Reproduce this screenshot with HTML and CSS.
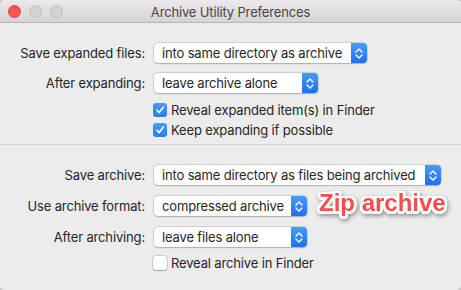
FILE: index.html
```html
<!DOCTYPE html>
<html>
<head>
<meta charset="utf-8">
<link rel="stylesheet" href="styles.css">
</head>
<body>
<div class="window">
  <div class="titlebar">
    <div class="lights">
      <span class="light red"></span>
      <span class="light"></span>
      <span class="light"></span>
    </div>
    <div class="title">Archive Utility Preferences</div>
  </div>
  <div class="section first">
    <div class="row">
      <div class="label">Save expanded files:</div>
      <div class="select w1"><span class="val">into same directory as archive</span><span class="stepper"><svg width="8" height="13" viewBox="0 0 8 13"><path d="M1 5 L4 2 L7 5 M1 8 L4 11 L7 8" fill="none" stroke="#fff" stroke-width="1.4" stroke-linecap="round" stroke-linejoin="round"/></svg></span></div>
    </div>
    <div class="row">
      <div class="label">After expanding:</div>
      <div class="select w2"><span class="val">leave archive alone</span><span class="stepper"><svg width="8" height="13" viewBox="0 0 8 13"><path d="M1 5 L4 2 L7 5 M1 8 L4 11 L7 8" fill="none" stroke="#fff" stroke-width="1.4" stroke-linecap="round" stroke-linejoin="round"/></svg></span></div>
    </div>
    <div class="checks">
      <div class="check"><span class="box on"><svg width="10" height="10" viewBox="0 0 10 10"><path d="M2 5.2 L4.2 7.6 L8.2 2.2" fill="none" stroke="#fff" stroke-width="1.6" stroke-linecap="round" stroke-linejoin="round"/></svg></span>Reveal expanded item(s) in Finder</div>
      <div class="check"><span class="box on"><svg width="10" height="10" viewBox="0 0 10 10"><path d="M2 5.2 L4.2 7.6 L8.2 2.2" fill="none" stroke="#fff" stroke-width="1.6" stroke-linecap="round" stroke-linejoin="round"/></svg></span>Keep expanding if possible</div>
    </div>
  </div>
  <div class="sep"></div>
  <div class="section second">
    <div class="row">
      <div class="label">Save archive:</div>
      <div class="select w3"><span class="val">into same directory as files being archived</span><span class="stepper"><svg width="8" height="13" viewBox="0 0 8 13"><path d="M1 5 L4 2 L7 5 M1 8 L4 11 L7 8" fill="none" stroke="#fff" stroke-width="1.4" stroke-linecap="round" stroke-linejoin="round"/></svg></span></div>
    </div>
    <div class="row">
      <div class="label">Use archive format:</div>
      <div class="select w4"><span class="val">compressed archive</span><span class="stepper"><svg width="8" height="13" viewBox="0 0 8 13"><path d="M1 5 L4 2 L7 5 M1 8 L4 11 L7 8" fill="none" stroke="#fff" stroke-width="1.4" stroke-linecap="round" stroke-linejoin="round"/></svg></span></div>
    </div>
    <div class="row">
      <div class="label">After archiving:</div>
      <div class="select w4"><span class="val">leave files alone</span><span class="stepper"><svg width="8" height="13" viewBox="0 0 8 13"><path d="M1 5 L4 2 L7 5 M1 8 L4 11 L7 8" fill="none" stroke="#fff" stroke-width="1.4" stroke-linecap="round" stroke-linejoin="round"/></svg></span></div>
    </div>
    <div class="checks">
      <div class="check"><span class="box"></span>Reveal archive in Finder</div>
    </div>
  </div>
  <div class="annot">Zip archive</div>
</div>
</body>
</html>
```
FILE: styles.css
```css
html, body {
  margin: 0;
  padding: 0;
  background: #c9c9c9;
}
body {
  width: 461px;
  height: 290px;
  overflow: hidden;
  font-family: "Inter", "Liberation Sans", sans-serif;
  font-size: 13px;
  letter-spacing: -0.15px;
  color: #262626;
}
.window {
  position: relative;
  width: 461px;
  height: 290px;
  background: #ececec;
  border-radius: 5px;
  overflow: hidden;
  box-sizing: border-box;
}
.titlebar {
  height: 22px;
  background: linear-gradient(#ebe9eb, #d5d3d5);
  border-bottom: 1px solid #b6b6b6;
  display: flex;
  align-items: center;
  position: relative;
}
.lights {
  display: flex;
  gap: 8px;
  padding-left: 8px;
}
.light {
  width: 11px;
  height: 11px;
  border-radius: 50%;
  background: #d3d3d3;
  border: 0.5px solid #bcbcbc;
}
.light.red {
  background: #fc5753;
  border-color: #de3f3b;
}
.title {
  position: absolute;
  left: 0;
  right: 0;
  text-align: center;
  font-size: 13px;
  color: #464646;
  top: 4px;
}
.section {
  display: flex;
  flex-direction: column;
}
.section.first {
  padding-top: 20px;
  gap: 10px;
  padding-bottom: 7px;
}
.section.second {
  padding-top: 20px;
  gap: 11px;
}
.row {
  display: flex;
  align-items: center;
  height: 20px;
}
.label {
  text-align: right;
  padding-right: 9px;
  box-sizing: border-box;
  width: 154px;
}
.select {
  height: 20px;
  box-sizing: border-box;
  background: #fff;
  border-radius: 4px;
  box-shadow: 0 0 0 0.5px rgba(0,0,0,0.18), 0 0.5px 1.5px rgba(0,0,0,0.2);
  display: flex;
  align-items: center;
  justify-content: space-between;
}
.val {
  padding-left: 8px;
  white-space: nowrap;
}
.w1 { width: 213px; }
.w2 { width: 164px; }
.w3 { width: 287px; }
.w4 { width: 153px; }
.stepper {
  width: 16px;
  height: 20px;
  border-radius: 0 4px 4px 0;
  background: linear-gradient(#4a9bfb, #1c6ff2);
  display: flex;
  align-items: center;
  justify-content: center;
}
.checks {
  display: flex;
  flex-direction: column;
  gap: 6px;
  padding-left: 153px;
}
.section.second .checks { margin-top: -2px; }
.check {
  display: flex;
  align-items: center;
  height: 14px;
  gap: 4px;
}
.box {
  width: 14px;
  height: 14px;
  box-sizing: border-box;
  border-radius: 3px;
  background: #fff;
  box-shadow: 0 0 0 0.5px rgba(0,0,0,0.25), 0 0.5px 1px rgba(0,0,0,0.2);
  display: flex;
  align-items: center;
  justify-content: center;
}
.box.on {
  background: linear-gradient(#4a9bfb, #2a7cf5);
  box-shadow: none;
}
.sep {
  height: 1px;
  background: #d4d4d4;
}
.annot {
  position: absolute;
  left: 319px;
  top: 189px;
  font-family: "Liberation Sans", Arial, sans-serif;
  font-weight: bold;
  font-size: 24px;
  letter-spacing: 0;
  color: #f24f4f;
  filter: drop-shadow(1px 2px 2px rgba(0,0,0,0.4));
  text-shadow:
    -2.5px 0 0 #fff, 2.5px 0 0 #fff, 0 -2.5px 0 #fff, 0 2.5px 0 #fff,
    -2px -2px 0 #fff, 2px -2px 0 #fff, -2px 2px 0 #fff, 2px 2px 0 #fff,
    -1px -2.5px 0 #fff, 1px -2.5px 0 #fff, -1px 2.5px 0 #fff, 1px 2.5px 0 #fff,
    -2.5px -1px 0 #fff, 2.5px -1px 0 #fff, -2.5px 1px 0 #fff, 2.5px 1px 0 #fff;
  white-space: nowrap;
}
```
